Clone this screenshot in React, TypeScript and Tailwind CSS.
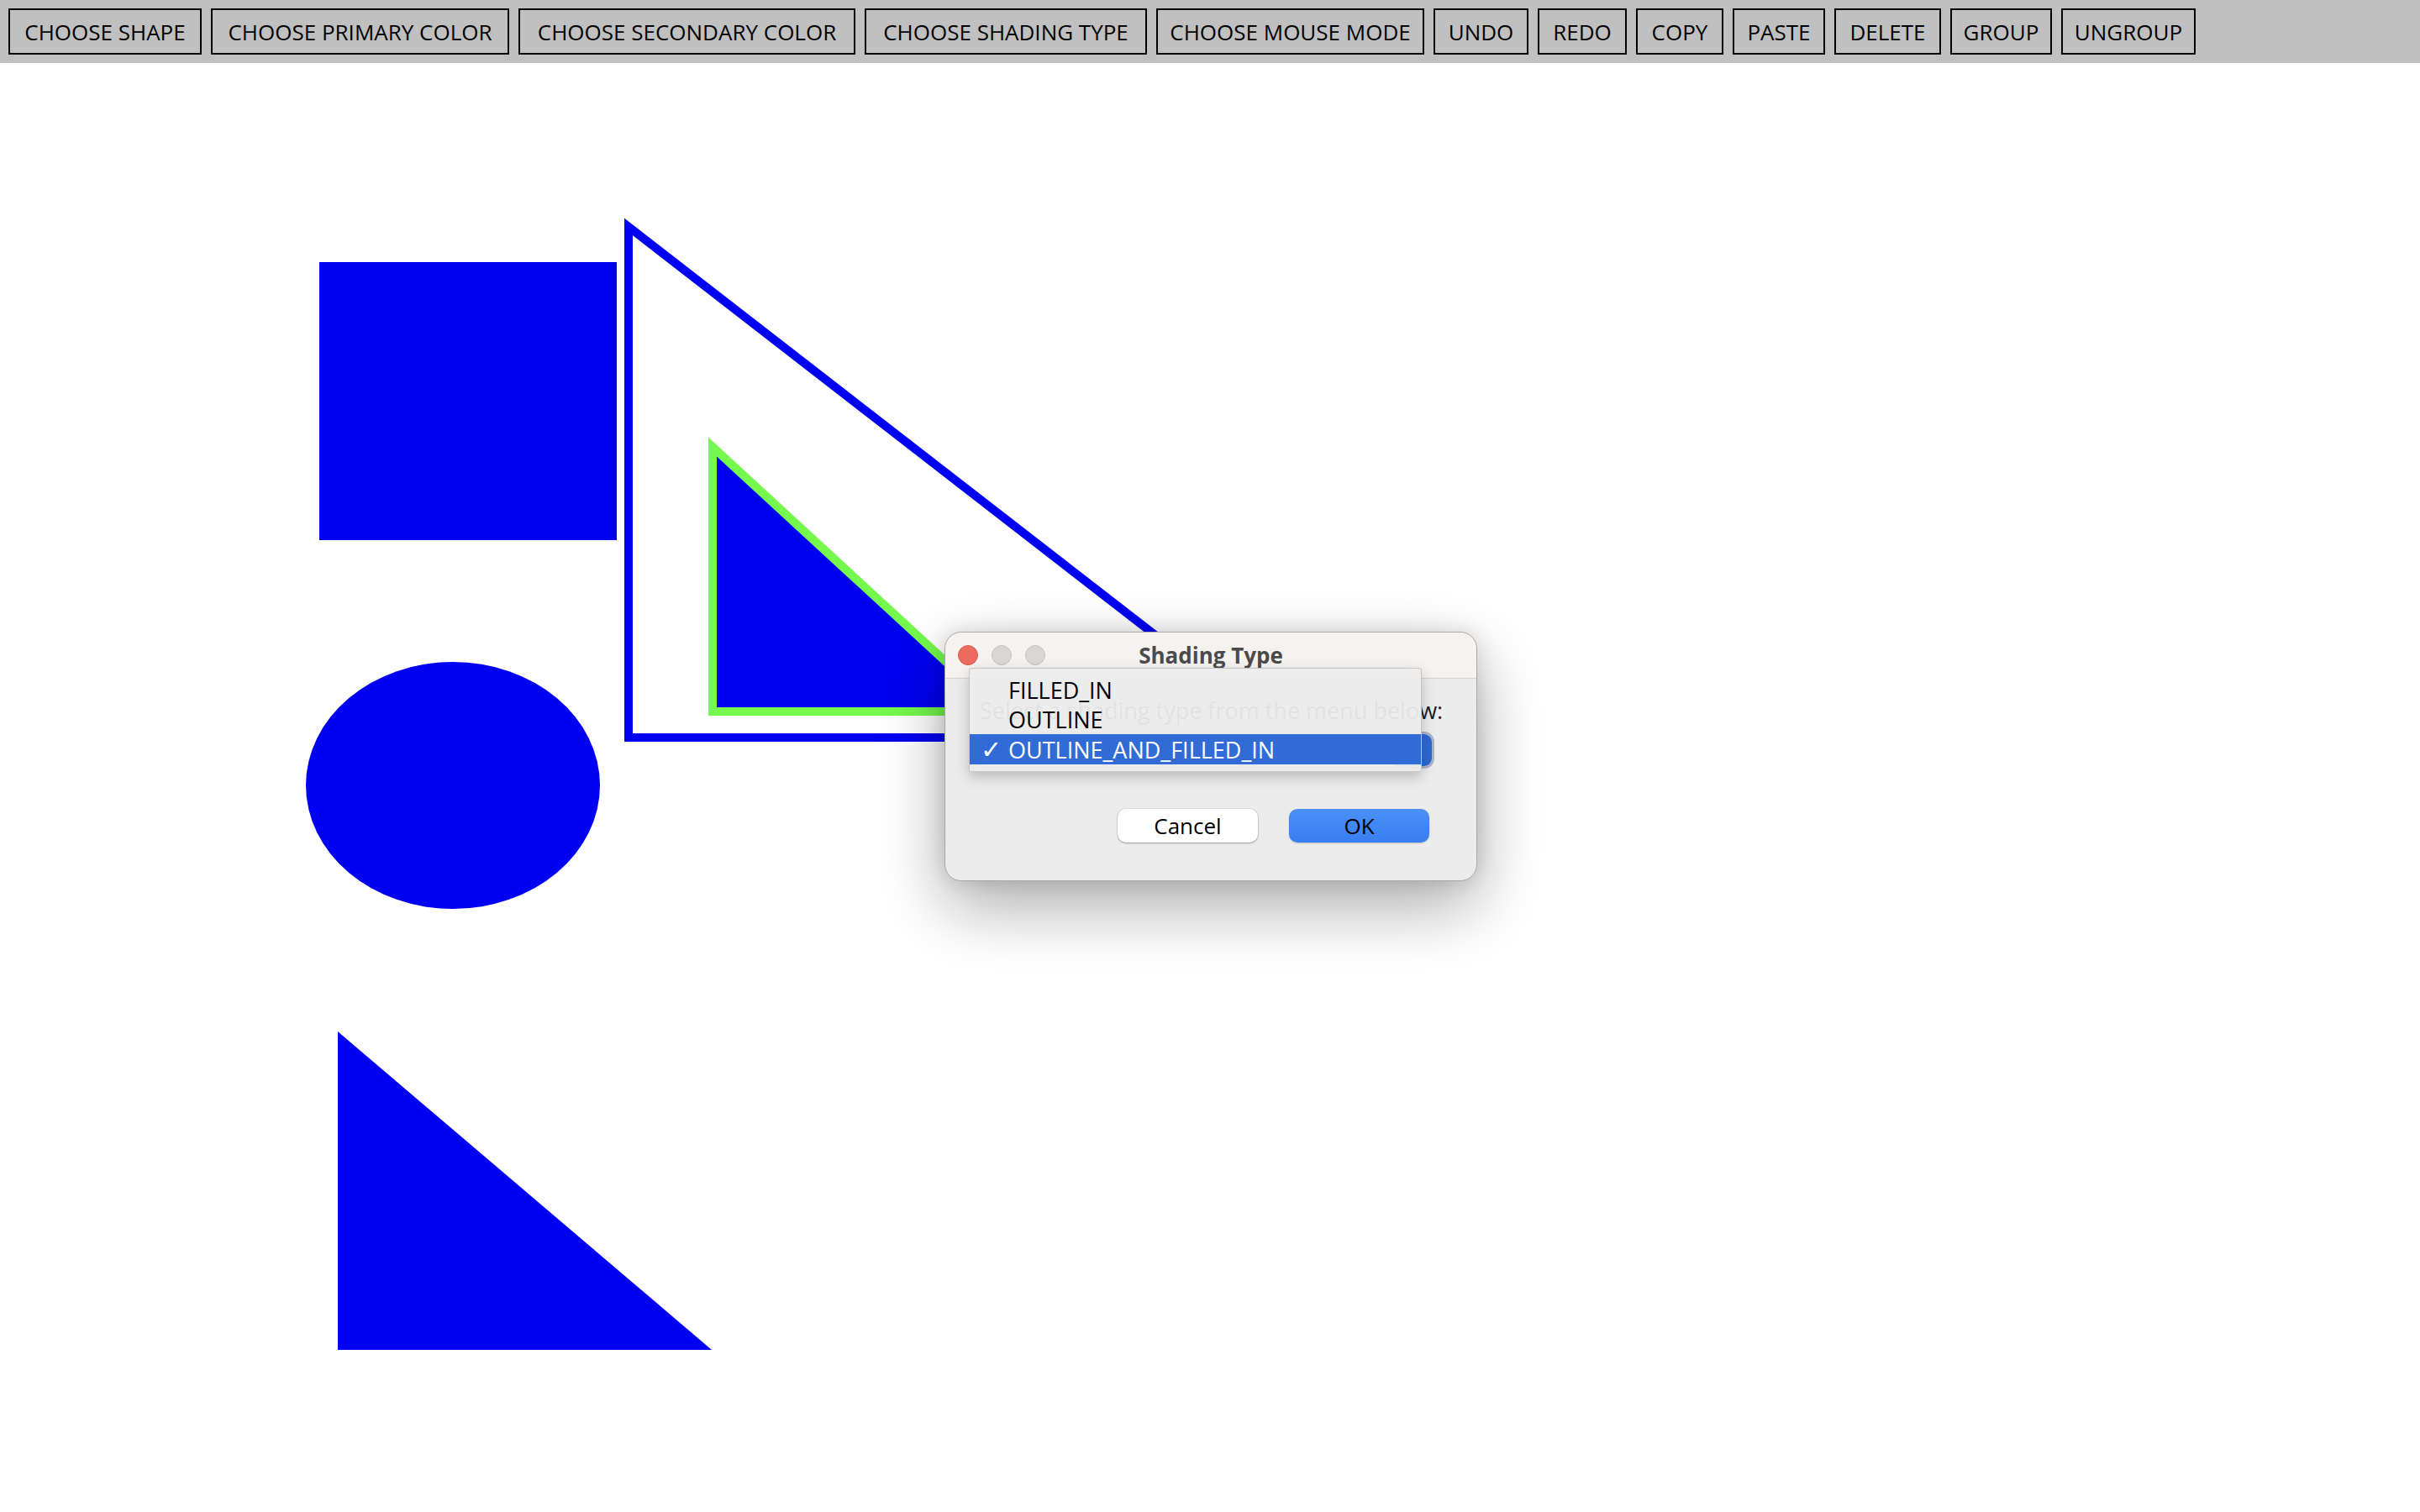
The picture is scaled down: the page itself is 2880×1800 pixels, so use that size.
import React from 'react';

const toolbarButtons: { label: string; width: number }[] = [
  { label: 'CHOOSE SHAPE', width: 230 },
  { label: 'CHOOSE PRIMARY COLOR', width: 355 },
  { label: 'CHOOSE SECONDARY COLOR', width: 401 },
  { label: 'CHOOSE SHADING TYPE', width: 336 },
  { label: 'CHOOSE MOUSE MODE', width: 319 },
  { label: 'UNDO', width: 113 },
  { label: 'REDO', width: 106 },
  { label: 'COPY', width: 104 },
  { label: 'PASTE', width: 110 },
  { label: 'DELETE', width: 127 },
  { label: 'GROUP', width: 121 },
  { label: 'UNGROUP', width: 160 },
];

const shadingOptions = ['FILLED_IN', 'OUTLINE', 'OUTLINE_AND_FILLED_IN'];

function Toolbar() {
  return (
    <div className="h-[75px] shrink-0 bg-[#c0c0c0] flex items-center gap-[11px] pl-[10px]">
      {toolbarButtons.map((b) => (
        <button
          key={b.label}
          style={{ width: b.width }}
          className="h-[55px] border-2 border-black bg-[#c0c0c0] text-black text-[26px] leading-none flex items-center justify-center whitespace-nowrap"
        >
          {b.label}
        </button>
      ))}
    </div>
  );
}

function Canvas() {
  // shapes drawn in page coordinates
  return (
    <svg className="block" width={2880} height={1725} viewBox="0 75 2880 1725">
      <rect x={380} y={312} width={354} height={331} fill="#0000f2" />
      <polygon points="748,270 748,878 1532,878" fill="none" stroke="#0000f2" strokeWidth={10} />
      <polygon points="848,532 848,847 1190,847" fill="#0000f2" stroke="#74f94c" strokeWidth={10} />
      <ellipse cx={539} cy={935} rx={175} ry={147} fill="#0000f2" />
      <polygon points="402,1228 402,1607 847,1607" fill="#0000f2" />
    </svg>
  );
}

function ShadingDialog() {
  return (
    <div className="absolute left-[1124px] top-[752px] w-[634px] h-[297px] rounded-[20px] bg-[#ececec] border border-[#a8a8a8] shadow-[0_30px_80px_rgba(0,0,0,0.33),0_0_24px_rgba(0,0,0,0.12)]">
      {/* Title bar */}
      <div className="relative h-[55px] rounded-t-[20px] bg-[#f6f2f0] border-b border-[#d5d2d0] flex items-center justify-center">
        <div className="absolute left-[15px] top-0 h-full flex items-center gap-[16px]">
          <span className="w-[24px] h-[24px] rounded-full bg-[#ec6a5e] border border-[#d55a4f]" />
          <span className="w-[24px] h-[24px] rounded-full bg-[#d9d6d4] border border-[#c6c2c0]" />
          <span className="w-[24px] h-[24px] rounded-full bg-[#d9d6d4] border border-[#c6c2c0]" />
        </div>
        <span className="text-[26px] font-bold text-[#4b4b4b] leading-none">Shading Type</span>
      </div>

      {/* Body */}
      <div className="pt-[20px] pl-[41px]">
        <p className="text-[27px] leading-[36px] text-[#1c1c1c] whitespace-nowrap">
          Select a shading type from the menu below:
        </p>
        <div className="mt-[10px] ml-[-2px] w-[540px] h-[38px] rounded-[9px] bg-white ring-[3px] ring-[#a9b6c8] flex justify-end overflow-hidden">
          <div className="w-[44px] h-full bg-[#2f68d2] flex flex-col items-center justify-center text-white/70 text-[12px] leading-[12px]">
            <span>⌃</span>
            <span>⌄</span>
          </div>
        </div>
        <div className="mt-[51px] pr-[56px] flex justify-end gap-[37px]">
          <button className="w-[167px] h-[40px] rounded-[10px] bg-white text-black text-[26px] leading-none shadow-[0_1px_2px_rgba(0,0,0,0.3),0_0_0_1px_rgba(0,0,0,0.06)]">
            Cancel
          </button>
          <button className="w-[167px] h-[40px] rounded-[10px] bg-gradient-to-b from-[#4b90f6] to-[#377ef1] text-black text-[26px] leading-none shadow-[0_1px_2px_rgba(0,0,0,0.2)]">
            OK
          </button>
        </div>
      </div>

      {/* Open popup menu */}
      <div className="absolute left-[28px] top-[42px] w-[539px] h-[124px] bg-[#ececec]/95 border border-[#c4c4c4] rounded-[3px] shadow-[0_6px_16px_rgba(0,0,0,0.22)] pt-[8px]">
        {shadingOptions.map((opt, i) => {
          const selected = i === shadingOptions.length - 1;
          return (
            <div
              key={opt}
              className={
                selected
                  ? 'h-[36px] bg-[#306bd6] text-white flex items-center text-[27px] leading-none'
                  : 'h-[35px] text-black flex items-center text-[27px] leading-none'
              }
            >
              <span className="w-[46px] pl-[13px] text-[30px] leading-none">{selected ? '✓' : ''}</span>
              <span>{opt}</span>
            </div>
          );
        })}
      </div>
    </div>
  );
}

export default function App() {
  return (
    <div className="relative w-[2880px] h-[1800px] bg-white overflow-hidden flex flex-col font-['Open_Sans','Liberation_Sans',sans-serif]">
      <Toolbar />
      <Canvas />
      <ShadingDialog />
    </div>
  );
}
